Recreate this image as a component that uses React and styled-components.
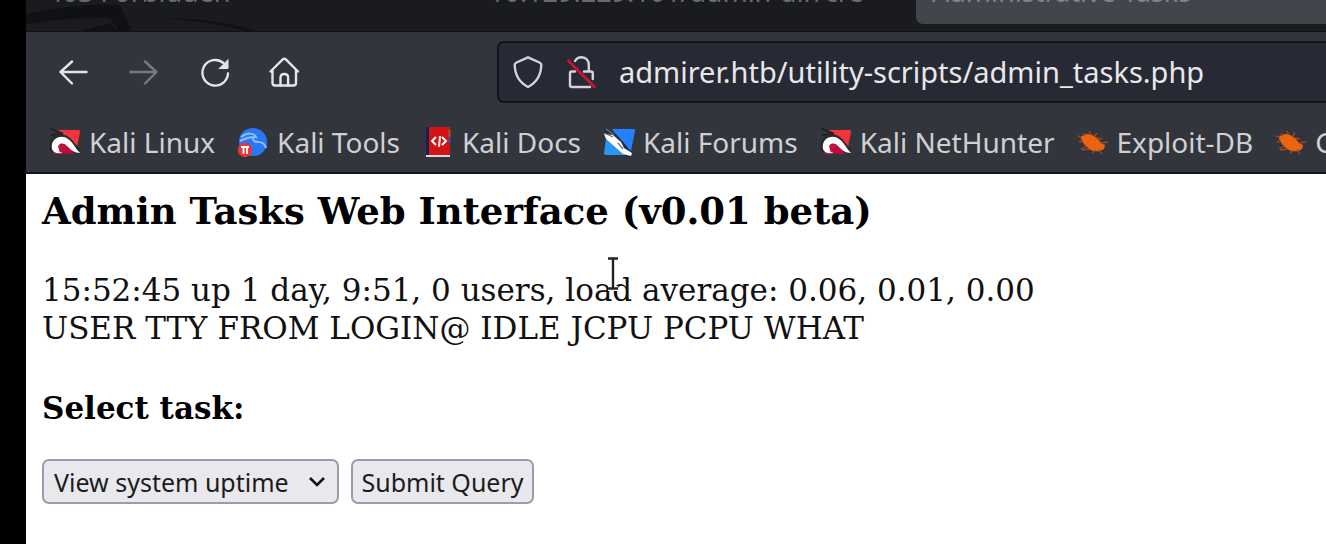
import React from 'react';
import styled, { createGlobalStyle } from 'styled-components';

const uiFont = '"Noto Sans", "Open Sans", sans-serif';
const pageFont = '"DejaVu Serif", serif';

const GlobalStyle = createGlobalStyle`
  *, *::before, *::after { box-sizing: border-box; }
  body { margin: 0; background: #fff; }
  #root { min-height: 100vh; display: flex; flex-direction: column; }
`;

const Desktop = styled.div`
  flex: 1;
  padding-left: 26px;
  background: #000;
  display: flex;
`;

const BrowserWindow = styled.div`
  flex: 1;
  min-width: 0;
  display: flex;
  flex-direction: column;
  background: #fff;
  overflow: hidden;
`;

const TabStrip = styled.div`
  position: relative;
  height: 32px;
  display: flex;
  align-items: flex-end;
  overflow: hidden;
  padding-left: 5px;
  background: #1a1b1f;
  border-bottom: 1px solid #101114;
`;

const TabArt = styled.svg`
  position: absolute;
  left: 0;
  top: 0;
`;

const Tab = styled.button`
  position: relative;
  flex: 0 0 ${(p) => p.$width}px;
  height: 52px;
  margin-bottom: 7px;
  padding: 0 16px 14px;
  border: 0;
  border-radius: 7px;
  display: flex;
  align-items: flex-end;
  font: 27px/36px ${uiFont};
  white-space: nowrap;
  background: ${(p) => (p.$active ? '#43454d' : 'transparent')};
  color: ${(p) => (p.$active ? '#80838a' : '#696b70')};
`;

const Toolbar = styled.div`
  display: flex;
  align-items: center;
  height: 80px;
  padding-left: 28px;
  background: #33353d;
`;

const NavButtons = styled.nav`
  display: flex;
  gap: 30px;
  flex: 0 0 443px;
`;

const IconButton = styled.button`
  width: 40px;
  height: 40px;
  padding: 0;
  border: 0;
  display: grid;
  place-items: center;
  background: none;
  color: ${(p) => (p.disabled ? '#77797e' : '#e6e6e8')};
`;

const UrlBox = styled.div`
  flex: 1;
  min-width: 0;
  height: 62px;
  display: flex;
  align-items: center;
  gap: 23px;
  padding-left: 14px;
  margin-right: -8px;
  border: 2px solid #121318;
  border-radius: 7px;
  background: #272934;
  color: #d4d4d8;
`;

const UrlInput = styled.input`
  flex: 1;
  min-width: 0;
  height: 44px;
  padding: 0;
  border: 0;
  outline: 0;
  background: none;
  color: #e8e8ea;
  font: 29px/44px ${uiFont};
`;

const Bookmarks = styled.nav`
  display: flex;
  align-items: center;
  gap: 22px;
  height: 62px;
  padding-left: 23px;
  background: #33353d;
  border-bottom: 2px solid #17181c;
`;

const Bookmark = styled.a`
  flex: none;
  display: flex;
  align-items: center;
  gap: 8px;
  color: #d0d0d2;
  font: 28px/38px ${uiFont};
  text-decoration: none;
  white-space: nowrap;
`;

const Page = styled.main`
  position: relative;
  padding: 16px;
  color: #000;
  font-family: ${pageFont};
`;

const Title = styled.h3`
  margin: 0 0 39px;
  font-size: 37px;
  line-height: 42px;
`;

const Output = styled.p`
  margin: 0 0 42px;
  font-size: 31px;
  line-height: 38px;
  color: #111;
`;

const TaskLabel = styled.label`
  display: block;
  margin-bottom: 32px;
  font-size: 31px;
  line-height: 38px;
  font-weight: bold;
`;

const Controls = styled.div`
  display: flex;
  gap: 12px;
`;

const SelectBox = styled.span`
  position: relative;
  display: flex;
`;

const control = `
  height: 45px;
  border: 2px solid #9c9ba8;
  border-radius: 7px;
  background: #e9e9ed;
  color: #1c1c20;
  font: 25px/36px ${uiFont};
`;

const TaskSelect = styled.select`
  ${control}
  appearance: none;
  width: 297px;
  padding: 0 40px 0 10px;
`;

const Chevron = styled.svg`
  position: absolute;
  right: 13px;
  top: 17px;
  pointer-events: none;
`;

const SubmitButton = styled.button`
  ${control}
  width: 183px;
  padding: 0;
  white-space: nowrap;
`;

const TextCursor = styled.svg`
  position: absolute;
  left: 579px;
  top: 82px;
`;

const line = { fill: 'none', stroke: 'currentColor', strokeWidth: 2.4, strokeLinecap: 'round', strokeLinejoin: 'round' };

const BackIcon = () => (
  <svg width="40" height="40" viewBox="0 0 40 40" {...line}><path d="M6.500 20H32.500M18 9.500 6.500 20 18 31.500" /></svg>
);
const ForwardIcon = () => (
  <svg width="40" height="40" viewBox="0 0 40 40" {...line}><path d="M6.500 20H32.500M21 9.500 32.500 20 21 31.500" /></svg>
);
const ReloadIcon = () => (
  <svg width="40" height="40" viewBox="0 0 40 40" {...line}>
    <path d="M34 21.500A12.800 12.800 0 1 1 29.500 11" />
    <path d="M34 8v8.500h-8.500z" fill="currentColor" strokeWidth="1" />
  </svg>
);
const HomeIcon = () => (
  <svg width="40" height="40" viewBox="0 0 40 40" {...line}>
    <path d="M6.500 19.500 19 7.200q1.300-1 2.600 0L34 19.500M8.500 18v13q0 2.500 2.500 2.500h18.500q2.500 0 2.500-2.500V18" />
    <path d="M16.500 33.500V25.500q0-3.500 3.800-3.500t3.800 3.500v8" />
  </svg>
);
const ShieldIcon = () => (
  <svg width="30" height="36" viewBox="1 0 30 36" {...line}>
    <path d="M16 3.300 27.500 8.500q1.800.8 1.800 2.500C29 21 25.500 28 16 33 6.500 28 3 21 2.700 11q0-1.700 1.800-2.500z" />
  </svg>
);
const InsecureIcon = () => (
  <svg width="30" height="36" viewBox="0 0 30 36" {...line}>
    <path d="M9 7C10.500 4.500 12.500 3.300 15.500 3.300c4.800 0 7.300 3.200 7.300 7.700v6.500M5.500 17.500H9M18 17.500h7q1.800 0 1.800 2V25M4 19.500V31q0 2 2 2h18M4 19.500q0-2 1.500-2" />
    <path d="m2.500 7 26 26" stroke="#cc1238" strokeWidth="2.800" />
  </svg>
);
const KaliIcon = () => (
  <svg width="32" height="32" viewBox="0 0 32 32">
    <path d="M8 4h22q1 0 1 2l-4 20-10-6z" fill="#f5333a" />
    <path d="M1 23v3q1 2 4 2h20l-7-12H8z" fill="#b80d3c" />
    <path d="m1 2 13 6M2 9l12-1" stroke="#202126" strokeWidth="2" />
    <path d="M5 26C-1 14 12 8 18 14c5 4 6 9 12 12" fill="none" stroke="#282a31" strokeWidth="7" />
    <path d="M3 23C1 12 13 8 19 13c5 3 7 9 12 14-6 0-9-3-13-7-4-5-11-2-8 3 1 2 2 3 3 4-6 1-9-1-10-4z" fill="#fff" />
    <path d="M12 26c-2-4 0-7 4-5" fill="none" stroke="#c2193a" strokeWidth="2.500" />
  </svg>
);
const ToolsIcon = () => (
  <svg width="32" height="32" viewBox="0 0 32 32">
    <circle cx="16" cy="16" r="14" fill="#2877f5" />
    <path d="M4 11c7-5 13-4 15 0-5-1-4 5 2 5 4 0 7 2 8 6M3 15c6-3 9-4 14-4" fill="none" stroke="#8cc0fb" strokeWidth="2" />
    <circle cx="8" cy="24" r="7.200" fill="#ee3439" />
    <path d="M4 21h8M6.500 21v7M10 21v7" stroke="#fff" strokeWidth="1.800" />
  </svg>
);
const DocsIcon = () => (
  <svg width="32" height="32" viewBox="0 0 32 32">
    <path d="M4 1h24v28H4z" fill="#d41414" />
    <path d="M4 1h3v28H4z" fill="#1e1c50" />
    <path d="M26.500 4h2v7h-2z" fill="#ad581b" />
    <path d="M26.500 11h2v6h-2z" fill="#364fb0" />
    <path d="M4 29h24v2H4z" fill="#dcdce0" />
    <path d="m14 11-4 4 4 4M20 11l4 4-4 4M18 10l-1 11" fill="none" stroke="#fff" strokeWidth="2" />
  </svg>
);
const ForumsIcon = () => (
  <svg width="32" height="32" viewBox="0 0 32 32">
    <path d="M9 3h22q1 0 1 2l-4 20-6-3z" fill="#2480fc" />
    <path d="M3 13 1 27q0 2 2 2h19l-6-9z" fill="#2497fb" />
    <path d="m1 2 12 6 8 9 9 11-3 3-9-5L1 11z" fill="#222c3e" />
    <path d="m1 8 9 1 8 7 3 6 8 5-1 3-8-2-8-7-9-8z" fill="#fff" />
    <path d="m3 3 8 6M1 7l9 4M15 17l5 6" stroke="#6d747f" strokeWidth="1.300" />
  </svg>
);
const ExploitIcon = () => (
  <svg width="32" height="32" viewBox="0 0 32 32" fill="#ed6410">
    <path d="M5 10q6-4 12 0 5 3 7 7l4 2-1 4-4 2q-7 1-11-2-5-4-7-8-2-3 0-5z" />
    <path d="m5 11-4-1M6 15l-4 1M10 20l-6 3M13 23l-8 1M19 24l-4 3M22 23l3 5M24 17l7-1M19 12l6 1M14 9 12 5M17 11l3-4M8 10 6 7" fill="none" stroke="#9a4c22" strokeWidth="1.300" />
  </svg>
);

const bookmarks = [
  ['Kali Linux', KaliIcon],
  ['Kali Tools', ToolsIcon],
  ['Kali Docs', DocsIcon],
  ['Kali Forums', ForumsIcon],
  ['Kali NetHunter', KaliIcon],
  ['Exploit-DB', ExploitIcon],
  ['Google Hacking DB', ExploitIcon],
];

export default function App() {
  return (
    <>
      <GlobalStyle />
      <Desktop>
        <BrowserWindow>
          <TabStrip>
            <TabArt width="260" height="32" viewBox="0 0 260 32">
              <path d="M0 14Q50 3 94 5l12 27H93L84 18Q40 17 0 24z" fill="#101115" />
              <path d="M53 32q15-6 32-8l7 8z" fill="#101115" />
              <path d="M134 18q58 0 100 14h-12q-35-11-88-14z" fill="#101115" />
            </TabArt>
            <Tab type="button" $width={442}>403 Forbidden</Tab>
            <Tab type="button" $width={443}>10.129.229.101/admin-dir/cre</Tab>
            <Tab type="button" $width={440} $active>Administrative Tasks</Tab>
          </TabStrip>
          <Toolbar>
            <NavButtons aria-label="Navigation">
              <IconButton type="button" aria-label="Back"><BackIcon /></IconButton>
              <IconButton type="button" aria-label="Forward" disabled><ForwardIcon /></IconButton>
              <IconButton type="button" aria-label="Reload"><ReloadIcon /></IconButton>
              <IconButton type="button" aria-label="Home"><HomeIcon /></IconButton>
            </NavButtons>
            <UrlBox>
              <ShieldIcon />
              <InsecureIcon />
              <UrlInput aria-label="Address" defaultValue="admirer.htb/utility-scripts/admin_tasks.php" spellCheck="false" />
            </UrlBox>
          </Toolbar>
          <Bookmarks aria-label="Bookmarks">
            {bookmarks.map(([label, Icon]) => (
              <Bookmark href="#" key={label}><Icon />{label}</Bookmark>
            ))}
          </Bookmarks>
          <Page>
            <Title>Admin Tasks Web Interface (v0.01 beta)</Title>
            <Output>
              15:52:45 up 1 day, 9:51, 0 users, load average: 0.06, 0.01, 0.00
              <br />
              USER TTY FROM LOGIN@ IDLE JCPU PCPU WHAT
            </Output>
            <TaskLabel htmlFor="task">Select task:</TaskLabel>
            <Controls>
              <SelectBox>
                <TaskSelect id="task"><option>View system uptime</option></TaskSelect>
                <Chevron width="18" height="12" viewBox="0 0 18 12" fill="none" stroke="#111" strokeWidth="2.600"><path d="m2 2 7 7 7-7" /></Chevron>
              </SelectBox>
              <SubmitButton type="submit">Submit Query</SubmitButton>
            </Controls>
            <TextCursor width="16" height="36" viewBox="0 0 16 36" aria-hidden="true" fill="none">
              <path d="M3 2.500h10M8 3v29M3 32.500h10" stroke="#fff" strokeWidth="5" />
              <path d="M3 2.500h10M8 3v29M3 32.500h10" stroke="#222" strokeWidth="2.400" />
            </TextCursor>
          </Page>
        </BrowserWindow>
      </Desktop>
    </>
  );
}
